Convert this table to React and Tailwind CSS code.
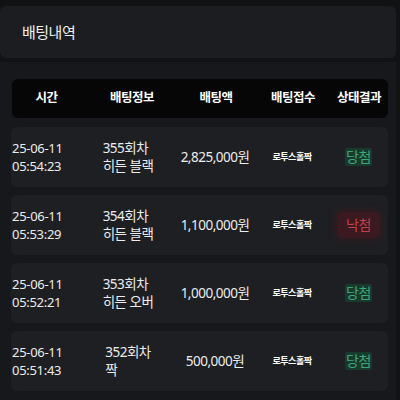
const rows = [
  { date: "25-06-11", time: "05:54:23", round: "355회차", pick: "히든 블랙", amount: "2,825,000원", win: true },
  { date: "25-06-11", time: "05:53:29", round: "354회차", pick: "히든 블랙", amount: "1,100,000원", win: false },
  { date: "25-06-11", time: "05:52:21", round: "353회차", pick: "히든 오버", amount: "1,000,000원", win: true },
  { date: "25-06-11", time: "05:51:43", round: "352회차", pick: "짝", amount: "500,000원", win: true },
];

const font = { fontFamily: '"Noto Sans", "Noto Sans CJK KR", sans-serif' };

function ResultBadge({ win }) {
  if (win) {
    return (
      <span className="px-[1px] rounded-[2px] bg-[#173a2d] text-[#3fa57b] text-[14px] leading-[18px] tracking-[-0.5px]">
        당첨
      </span>
    );
  }
  return (
    <span className="px-[9px] py-[4px] rounded-[6px] bg-[#3a1a20] shadow-[0_0_6px_2px_rgba(58,26,32,0.8)] text-[#c2404e] text-[14px] leading-[18px] tracking-[-0.5px]">
      낙첨
    </span>
  );
}

export default function App() {
  return (
    <div className="w-[400px] h-[400px] overflow-hidden bg-[#111214] pt-[6px]" style={font}>
      <div className="w-[396px] h-[52px] rounded-[6px] bg-[#1c1d20] flex items-center pl-[22px]">
        <span className="text-[15px] tracking-[-0.5px] text-[#f0f0f0]">배팅내역</span>
      </div>

      <div className="mt-[4px] w-[396px] h-[400px] bg-[#17181b] pt-[17px] pl-[11px]">
        <div className="ml-[1px] w-[376px] h-[39px] rounded-[6px] bg-[#060606] grid grid-cols-[68px_98px_76px_78px_1fr] items-center text-center text-white font-bold text-[12.5px] tracking-[-0.5px]">
          <span className="pl-[1px]">시간</span>
          <span className="pl-[6px]">배팅정보</span>
          <span>배팅액</span>
          <span>배팅접수</span>
          <span className="pr-[2px]">상태결과</span>
        </div>

        <div className="mt-[9px] flex flex-col gap-[8px]">
          {rows.map((r) => (
            <div
              key={r.round}
              className="w-[377px] h-[60px] rounded-[6px] bg-[#1e1f22] grid grid-cols-[68px_98px_76px_78px_1fr] items-center text-[#ececec]"
            >
              <div className="pl-[1px] text-[13px] leading-[18px] tracking-[-0.3px]">
                <div>{r.date}</div>
                <div>{r.time}</div>
              </div>
              <div className="flex justify-center">
                <div className="text-[13.5px] leading-[18px] tracking-[-0.5px]">
                  <div>{r.round}</div>
                  <div>{r.pick}</div>
                </div>
              </div>
              <div className="text-center text-[13.5px] tracking-[-0.5px]">{r.amount}</div>
              <div className="text-center text-[9px] font-bold tracking-[-0.5px] text-white">로투스홀짝</div>
              <div className="flex justify-center pr-[2px]">
                <ResultBadge win={r.win} />
              </div>
            </div>
          ))}
        </div>
      </div>
    </div>
  );
}
